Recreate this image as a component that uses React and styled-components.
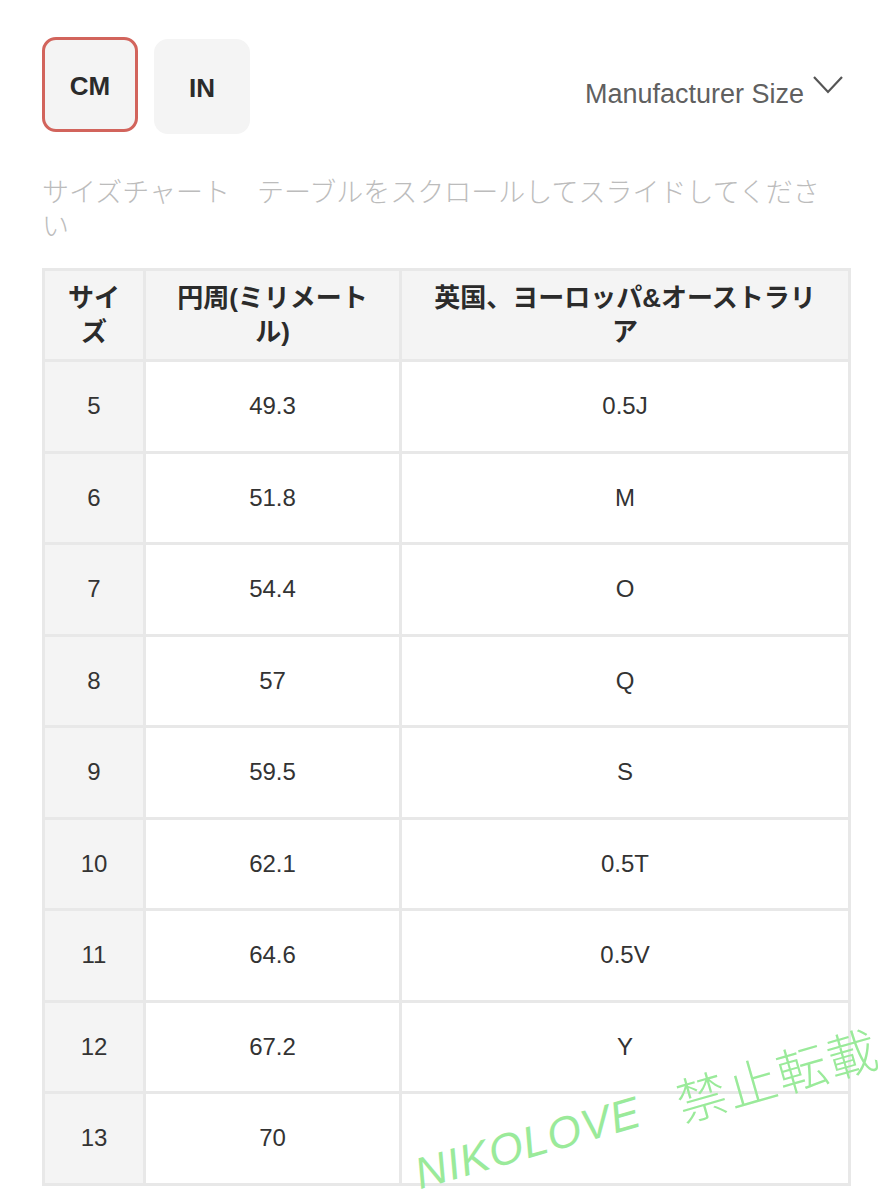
import React from "react";
import styled, { createGlobalStyle } from "styled-components";

const GlobalStyle = createGlobalStyle`
  body {
    margin: 0;
    background: #fff;
    font-family: "Liberation Sans", "Noto Sans CJK JP", Arial, sans-serif;
    color: #333;
  }
`;

const rows = [
  ["5", "49.3", "0.5J"],
  ["6", "51.8", "M"],
  ["7", "54.4", "O"],
  ["8", "57", "Q"],
  ["9", "59.5", "S"],
  ["10", "62.1", "0.5T"],
  ["11", "64.6", "0.5V"],
  ["12", "67.2", "Y"],
  ["13", "70", ""],
];

function App() {
  return (
    <StyledPage>
      <GlobalStyle />
      <StyledTop>
        <StyledUnits>
          <StyledUnit active>CM</StyledUnit>
          <StyledUnit>IN</StyledUnit>
        </StyledUnits>
        <StyledSelect>
          Manufacturer Size
          <svg width="32" height="20" viewBox="0 0 32 20">
            <path d="M2 2 L16 17 L30 2" fill="none" stroke="#555" strokeWidth="2.2" />
          </svg>
        </StyledSelect>
      </StyledTop>
      <StyledHint>サイズチャート　テーブルをスクロールしてスライドしてください</StyledHint>
      <StyledTable>
        <colgroup>
          <col width="101" />
          <col width="256" />
          <col width="449" />
        </colgroup>
        <thead>
          <tr>
            <StyledTh>サイズ</StyledTh>
            <StyledTh>円周(ミリメートル)</StyledTh>
            <StyledTh>英国、ヨーロッパ&オーストラリア</StyledTh>
          </tr>
        </thead>
        <tbody>
          {rows.map(row => (
            <tr key={row[0]}>
              <StyledTd first>{row[0]}</StyledTd>
              <StyledTd>{row[1]}</StyledTd>
              <StyledTd>{row[2]}</StyledTd>
            </tr>
          ))}
        </tbody>
      </StyledTable>
      <StyledMark>
        <span>NIKOLOVE</span>
        <StyledMarkCjk>禁止転載</StyledMarkCjk>
      </StyledMark>
    </StyledPage>
  );
}

const StyledPage = styled.div`
  position: relative;
  box-sizing: border-box;
  width: 890px;
  height: 1200px;
  overflow: hidden;
  padding: 37px 42px 0 42px;
`;

const StyledTop = styled.div`
  display: flex;
  justify-content: space-between;
  align-items: flex-start;
`;

const StyledUnits = styled.div`
  display: flex;
  gap: 16px;
`;

const StyledUnit = styled.div`
  box-sizing: border-box;
  width: 96px;
  height: 95px;
  padding-top: 4px;
  border-radius: 14px;
  background: #f4f4f4;
  border: 3px solid ${props => (props.active ? "#d2645c" : "#f4f4f4")};
  margin-top: ${props => (props.active ? "0" : "2px")};
  display: flex;
  align-items: center;
  justify-content: center;
  font-size: 26px;
  font-weight: bold;
  color: #2b2b2b;
`;

const StyledSelect = styled.div`
  display: flex;
  align-items: flex-start;
  gap: 8px;
  margin-top: 42px;
  margin-right: 4px;
  font-size: 27px;
  color: #606060;
  svg {
    margin-top: -4px;
  }
`;

const StyledHint = styled.div`
  margin-top: 40px;
  max-width: 800px;
  font-size: 27px;
  line-height: 34px;
  color: #bcbcbc;
  font-family: "Noto Sans CJK JP", sans-serif;
  font-weight: 300;
`;

const StyledTable = styled.table`
  margin-top: 26px;
  width: 806px;
  table-layout: fixed;
  border-collapse: collapse;
  border: 3px solid #e8e8e8;
`;

const StyledTh = styled.th`
  height: 88px;
  padding: 0 22px;
  background: #f4f4f4;
  border: 3px solid #e8e8e8;
  font-size: 26px;
  line-height: 34px;
  font-weight: bold;
  color: #2b2b2b;
  text-align: center;
`;

const StyledTd = styled.td`
  height: 88.5px;
  padding: 0 16px;
  border: 3px solid #e8e8e8;
  background: ${props => (props.first ? "#f4f4f4" : "#fff")};
  font-size: 24px;
  color: #333;
  text-align: center;
`;

const StyledMark = styled.div`
  position: absolute;
  left: 422px;
  bottom: 4px;
  display: flex;
  align-items: flex-end;
  gap: 38px;
  line-height: 1;
  transform: rotate(-16deg);
  transform-origin: left bottom;
  font-size: 44px;
  font-style: italic;
  letter-spacing: 1px;
  color: #9aea9a;
  white-space: nowrap;
  font-family: "Liberation Sans", sans-serif;
`;

const StyledMarkCjk = styled.span`
  margin-bottom: -4px;
  font-size: 50px;
  font-style: normal;
  font-weight: 300;
  letter-spacing: 2px;
  font-family: "Noto Sans CJK JP", sans-serif;
`;

export default App;
